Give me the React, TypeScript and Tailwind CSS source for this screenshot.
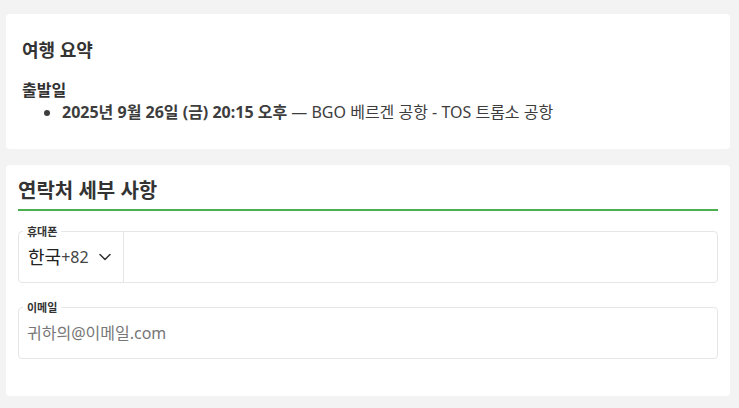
import { ChevronDown } from "lucide-react";

export default function App() {
  return (
    <div className="min-h-screen bg-[#f3f3f3] pt-[14px] font-['Noto_Sans','Noto_Sans_CJK_KR',sans-serif] text-[#333]">
      {/* Trip summary */}
      <section className="ml-[6px] w-[724px] rounded-[4px] bg-white px-4 pt-[24px] pb-[27px]">
        <h3 className="text-[18px] font-bold leading-6">여행 요약</h3>
        <div className="mt-[18px] text-[16px] font-bold leading-5">출발일</div>
        <ul className="mt-[2px] list-disc pl-10 text-[16px] leading-5 text-[#3d3d3d]">
          <li>
            <strong>2025년 9월 26일 (금) 20:15 오후</strong> — BGO 베르겐 공항 - TOS 트롬소 공항
          </li>
        </ul>
      </section>

      {/* Contact details */}
      <section className="mt-4 ml-[6px] w-[724px] rounded-[4px] bg-white px-3 pt-[14px] pb-[37px]">
        <h2 className="border-b-2 border-[#4caf50] pb-[6px] text-[20px] font-bold leading-6">
          연락처 세부 사항
        </h2>

        {/* Phone */}
        <div className="relative mt-[20px] flex h-[52px] rounded-[4px] border border-[#e6e6e6]">
          <span className="absolute -top-[7px] left-[4px] bg-white px-[4px] text-[11px] font-bold leading-[14px]">
            휴대폰
          </span>
          <button type="button" className="flex w-[105px] items-center border-r border-[#e6e6e6] pl-[9px]">
            <span className="text-[18px] leading-6 text-[#222]">한국</span>
            <span className="text-[16px] leading-6 text-[#444]">+82</span>
            <ChevronDown className="ml-[6px] text-[#333]" size={20} strokeWidth={1.8} />
          </button>
          <input type="tel" className="flex-1 px-2 text-[16px] outline-none" />
        </div>

        {/* Email */}
        <div className="relative mt-[24px] flex h-[52px] items-center rounded-[4px] border border-[#e6e6e6]">
          <span className="absolute -top-[7px] left-[4px] bg-white px-[4px] text-[11px] font-bold leading-[14px]">
            이메일
          </span>
          <input
            type="email"
            placeholder="귀하의@이메일.com"
            className="h-full w-full bg-transparent pl-[8px] text-[16px] outline-none placeholder:text-[#777]"
          />
        </div>
      </section>
    </div>
  );
}
